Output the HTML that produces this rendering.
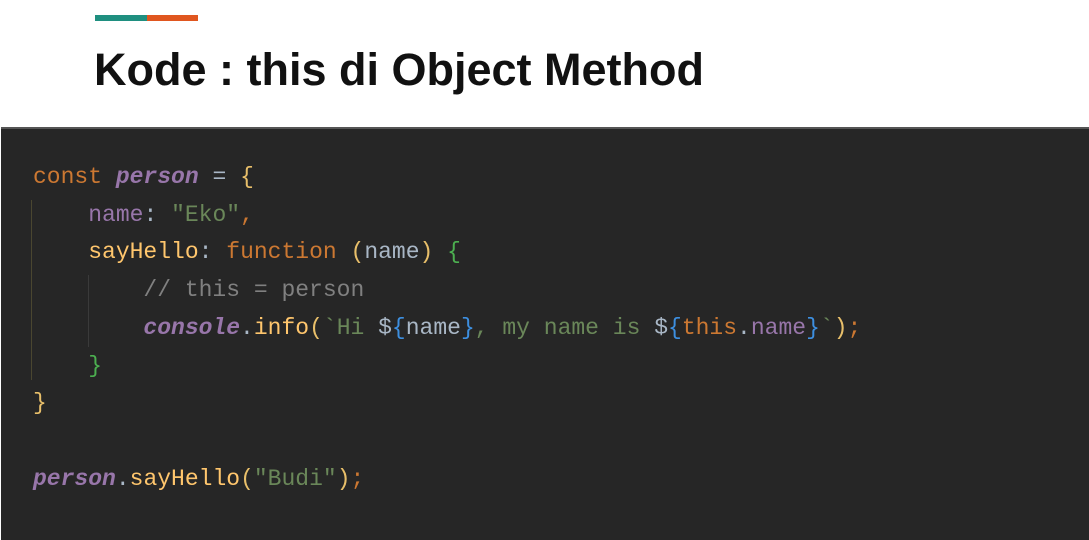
<!DOCTYPE html>
<html><head><style>
body{margin:0;width:1089px;height:538px;background:#fff;position:relative;overflow:hidden;font-family:"Liberation Sans",sans-serif}
.b1{position:absolute;left:95px;top:15px;width:52px;height:6px;background:#1f8f80}
.b2{position:absolute;left:147px;top:15px;width:51px;height:6px;background:#e0561f}
h1{position:absolute;left:94px;top:44px;margin:0;font-size:45px;font-weight:bold;color:#111;letter-spacing:0px}
.code{position:absolute;left:1px;top:127px;width:1088px;height:411px;background:#262626;border-top:2px solid #555}
pre{position:absolute;left:33px;top:30px;margin:0;font-family:"Liberation Mono",monospace;font-size:23px;line-height:37.7px;color:#a9b7c6}
.k{color:#cc7832}.p{color:#9876aa;font-style:italic;font-weight:bold}.f{color:#9876aa}.y{color:#ffc66d}.s{color:#6a8759}.c{color:#808080}.g{color:#4caf50}.bl{color:#3d8fe0}.w{color:#a9b7c6}.o{color:#e8bf6a}
.g1{position:absolute;left:31px;top:200px;width:1px;height:180px;background:#4a4630}
.g2{position:absolute;left:88px;top:275px;width:1px;height:72px;background:#3a3a3a}
</style></head><body>
<div class="b1"></div><div class="b2"></div>
<h1>Kode : this di Object Method</h1>
<div class="code"></div>
<div class="g1"></div><div class="g2"></div>
<pre style="top:159px"><span class="k">const</span> <span class="p">person</span> <span class="w">=</span> <span class="o">{</span>
    <span class="f">name</span><span class="w">:</span> <span class="s">"Eko"</span><span class="k">,</span>
    <span class="y">sayHello</span><span class="w">:</span> <span class="k">function</span> <span class="o">(</span><span class="w">name</span><span class="o">)</span> <span class="g">{</span>
        <span class="c">// this = person</span>
        <span class="p">console</span><span class="w">.</span><span class="y">info</span><span class="o">(</span><span class="s">`Hi </span><span class="w">$</span><span class="bl">{</span><span class="w">name</span><span class="bl">}</span><span class="s">, my name is </span><span class="w">$</span><span class="bl">{</span><span class="k">this</span><span class="w">.</span><span class="f">name</span><span class="bl">}</span><span class="s">`</span><span class="o">)</span><span class="k">;</span>
    <span class="g">}</span>
<span class="o">}</span>

<span class="p">person</span><span class="w">.</span><span class="y">sayHello</span><span class="o">(</span><span class="s">"Budi"</span><span class="o">)</span><span class="k">;</span></pre>
</body></html>
